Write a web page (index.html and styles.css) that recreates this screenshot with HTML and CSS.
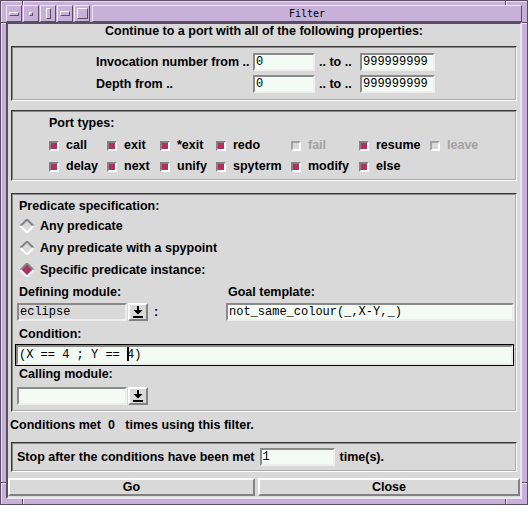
FILE: index.html
```html
<!DOCTYPE html>
<html>
<head>
<meta charset="utf-8">
<link rel="stylesheet" href="styles.css">
</head>
<body>
<div class="win">
  <svg class="notches" width="528" height="505" viewBox="0 0 528 505">
    <g stroke="#5b4d63" stroke-width="1">
      <line x1="22.5" y1="0" x2="22.5" y2="5"/>
      <line x1="505.5" y1="0" x2="505.5" y2="5"/>
      <line x1="22.5" y1="499" x2="22.5" y2="505"/>
      <line x1="505.5" y1="499" x2="505.5" y2="505"/>
      <line x1="0" y1="22.5" x2="6" y2="22.5"/>
      <line x1="522" y1="22.5" x2="528" y2="22.5"/>
      <line x1="0" y1="482.5" x2="6" y2="482.5"/>
      <line x1="522" y1="482.5" x2="528" y2="482.5"/>
    </g>
    <g stroke="#eee6f4" stroke-width="1">
      <line x1="23.5" y1="1" x2="23.5" y2="5"/>
      <line x1="506.5" y1="1" x2="506.5" y2="5"/>
      <line x1="23.5" y1="499" x2="23.5" y2="504"/>
      <line x1="506.5" y1="499" x2="506.5" y2="504"/>
      <line x1="1" y1="23.5" x2="6" y2="23.5"/>
      <line x1="522" y1="23.5" x2="527" y2="23.5"/>
      <line x1="1" y1="483.5" x2="6" y2="483.5"/>
      <line x1="522" y1="483.5" x2="527" y2="483.5"/>
    </g>
  </svg>
  <div class="titlebar">
    <div class="tbtn"><span class="g-menu"></span></div>
    <div class="tbtn"><span class="g-dot"></span></div>
    <div class="tbtn"><span class="g-tall"></span></div>
    <div class="tbtn"><span class="g-wide"></span></div>
    <div class="tbtn"><span class="g-sq"></span></div>
    <div class="title">Filter</div>
  </div>
  <div class="client">
    <div class="heading">Continue to a port with all of the following properties:</div>

    <div class="frame f-range">
      <div class="range-grid">
        <span class="lbl">Invocation number from ..</span>
        <span class="entry e-from">0</span>
        <span class="lbl to">.. to ..</span>
        <span class="entry e-to">999999999</span>
        <span class="lbl">Depth from ..</span>
        <span class="entry e-from">0</span>
        <span class="lbl to">.. to ..</span>
        <span class="entry e-to">999999999</span>
      </div>
    </div>

    <div class="frame f-ports">
      <div class="ports-title">Port types:</div>
      <div class="ports-grid">
        <label class="cb"><span class="ind on"></span>call</label>
        <label class="cb"><span class="ind on"></span>exit</label>
        <label class="cb"><span class="ind on"></span>*exit</label>
        <label class="cb"><span class="ind on"></span>redo</label>
        <label class="cb dis"><span class="ind"></span>fail</label>
        <label class="cb"><span class="ind on"></span>resume</label>
        <label class="cb dis"><span class="ind"></span>leave</label>
        <label class="cb"><span class="ind on"></span>delay</label>
        <label class="cb"><span class="ind on"></span>next</label>
        <label class="cb"><span class="ind on"></span>unify</label>
        <label class="cb"><span class="ind on"></span>spyterm</label>
        <label class="cb"><span class="ind on"></span>modify</label>
        <label class="cb"><span class="ind on"></span>else</label>
      </div>
    </div>

    <div class="frame f-pred">
      <div class="plabel">Predicate specification:</div>
      <div class="radios">
        <div class="radio"><svg class="dia" width="14" height="14" viewBox="0 0 14 14"><polygon points="7,0.5 13.5,7 7,13.5 0.5,7" fill="#d9d9d9"/><polyline points="0.5,7 7,0.5 13.5,7" fill="none" stroke="#828282" stroke-width="2"/><polyline points="0.5,7 7,13.5 13.5,7" fill="none" stroke="#ffffff" stroke-width="2"/></svg>Any predicate</div>
        <div class="radio"><svg class="dia" width="14" height="14" viewBox="0 0 14 14"><polygon points="7,0.5 13.5,7 7,13.5 0.5,7" fill="#d9d9d9"/><polyline points="0.5,7 7,0.5 13.5,7" fill="none" stroke="#828282" stroke-width="2"/><polyline points="0.5,7 7,13.5 13.5,7" fill="none" stroke="#ffffff" stroke-width="2"/></svg>Any predicate with a spypoint</div>
        <div class="radio"><svg class="dia" width="14" height="14" viewBox="0 0 14 14"><polygon points="7,0.5 13.5,7 7,13.5 0.5,7" fill="#b03060"/><polyline points="0.5,7 7,0.5 13.5,7" fill="none" stroke="#828282" stroke-width="2"/><polyline points="0.5,7 7,13.5 13.5,7" fill="none" stroke="#ffffff" stroke-width="2"/></svg>Specific predicate instance:</div>
      </div>
      <div class="mod-grid">
        <div class="plabel">Defining module:</div>
        <div class="plabel">Goal template:</div>
        <div class="mod-cell">
          <span class="entry e-mod ro">eclipse</span>
          <span class="arrowbtn"><svg width="12" height="12" viewBox="0 0 12 12"><path d="M5 0h2v4h3.5L6 8.5 1.5 4H5z" fill="#000"/><rect x="1" y="10" width="10" height="2" fill="#000"/></svg></span>
          <span class="colon">:</span>
        </div>
        <span class="entry e-goal">not_same_colour(_,X-Y,_)</span>
      </div>
      <div class="plabel cond-l">Condition:</div>
      <div class="cond-ring"><span class="entry e-cond">(X == 4 ; Y == <span class="caret"></span>4)</span></div>
      <div class="plabel call-l">Calling module:</div>
      <div class="mod-cell call-row">
        <span class="entry e-mod"></span>
        <span class="arrowbtn"><svg width="12" height="12" viewBox="0 0 12 12"><path d="M5 0h2v4h3.5L6 8.5 1.5 4H5z" fill="#000"/><rect x="1" y="10" width="10" height="2" fill="#000"/></svg></span>
      </div>
    </div>

    <div class="met">Conditions met  0   times using this filter.</div>

    <div class="frame f-stop">
      <span class="lbl">Stop after the conditions have been met</span>
      <span class="entry e-stop">1</span>
      <span class="lbl">time(s).</span>
    </div>

    <div class="buttons">
      <div class="btn go">Go</div>
      <div class="btn close">Close</div>
    </div>
  </div>
</div>
</body>
</html>
```

FILE: styles.css
```css
* { box-sizing: border-box; }
html, body { margin: 0; padding: 0; background: #ffffff; }
body {
  font-family: "Liberation Sans", Arial, sans-serif;
  font-size: 12.5px;
  font-weight: bold;
  color: #000;
  line-height: 15px;
}

.win {
  position: relative;
  width: 528px;
  height: 505px;
  background: #c8b1d9;
  border: 1px solid #5b4d63;
  box-shadow: inset 1px 1px 0 #e6dcee;
  padding: 4px 5px 5px 5px;
  display: flex;
  flex-direction: column;
}
.notches {
  position: absolute;
  left: -1px;
  top: -1px;
  pointer-events: none;
}

.titlebar {
  height: 17px;
  display: flex;
  gap: 1px;
}
.tbtn {
  width: 16px;
  height: 17px;
  border: 1px solid;
  border-color: #eee6f4 #5b4d63 #5b4d63 #eee6f4;
  display: flex;
  align-items: center;
  justify-content: center;
}
.tbtn span {
  display: block;
  border: 1px solid;
  border-color: #ffffff #5b4d63 #5b4d63 #ffffff;
}
.g-menu { width: 10px; height: 4px; }
.g-dot { width: 4px; height: 4px; }
.g-tall { width: 5px; height: 11px; }
.g-wide { width: 10px; height: 5px; }
.g-sq { width: 11px; height: 11px; }

.title {
  flex: 1;
  margin-left: 1px;
  border: 1px solid;
  border-color: #eee6f4 #5b4d63 #5b4d63 #eee6f4;
  font-family: "DejaVu Sans Mono", "Liberation Mono", monospace;
  font-weight: normal;
  font-size: 10px;
  line-height: 15px;
  text-align: center;
}

.client {
  flex: 1;
  background: #d9d9d9;
  border: 2px solid;
  border-color: #5b4d63 #eee6f4 #eee6f4 #5b4d63;
  display: flex;
  flex-direction: column;
}

.heading {
  text-align: center;
  height: 15px;
}

.frame {
  margin: 0 3px;
  border: 2px solid;
  border-color: #8a8a8a #ffffff #ffffff #8a8a8a;
  border-style: groove;
}

.entry {
  display: block;
  height: 18px;
  background: #f4fbf4;
  border: 2px solid;
  border-color: #8a8a8a #eeeeee #eeeeee #8a8a8a;
  font-family: "Liberation Mono", "DejaVu Sans Mono", monospace;
  font-weight: normal;
  font-size: 12px;
  line-height: 14px;
  padding-left: 1px;
  white-space: pre;
  overflow: hidden;
}
.entry.ro { background: #d9d9d9; }

/* range frame */
.f-range {
  margin-top: 7px;
  padding: 5px 0 6px 83px;
}
.range-grid {
  display: grid;
  grid-template-columns: 153px 62px 37px 75px;
  grid-auto-rows: 18px;
  row-gap: 4px;
  column-gap: 4px;
  align-items: center;
  white-space: nowrap;
}

/* ports */
.f-ports {
  margin-top: 9px;
  padding: 4px 0 2px 36px;
}
.ports-title { height: 15px; }
.ports-grid {
  margin-top: 4px;
  display: grid;
  grid-template-columns: 58px 53px 56px 75px 68px 71px auto;
  grid-auto-rows: 21px;
}
.cb {
  display: flex;
  align-items: center;
  white-space: nowrap;
}
.ind {
  width: 10px;
  height: 10px;
  margin-right: 7px;
  border: 2px solid;
  border-color: #828282 #ffffff #ffffff #828282;
  background: #d9d9d9;
}
.ind.on { background: #b03060; }
.cb.dis { color: #a3a3a3; }
.cb.dis .ind { border-color: #a3a3a3 #ffffff #ffffff #a3a3a3; }

/* predicate */
.f-pred {
  margin-top: 12px;
  padding: 4px 1px 5px 4px;
}
.plabel { padding-left: 2px; height: 15px; white-space: nowrap; }
.radios { margin-top: 1px; }
.radio {
  height: 22px;
  display: flex;
  align-items: center;
  padding-left: 3px;
}
.dia { margin-right: 6px; }
.mod-grid {
  margin-top: 4px;
  display: grid;
  grid-template-columns: 209px 1fr;
  row-gap: 3px;
}
.mod-cell { display: flex; align-items: center; }
.e-mod { width: 110px; }
.arrowbtn {
  width: 20px;
  height: 18px;
  margin-left: 1px;
  background: #d9d9d9;
  border: 2px solid;
  border-color: #ffffff #828282 #828282 #ffffff;
  display: flex;
  align-items: center;
  justify-content: center;
}
.colon { margin-left: 6px; }
.cond-l { margin-top: 6px; }
.cond-ring {
  margin: 2px 0 0 -2px;
  border: 1px solid #000;
  height: 22px;
}
.e-cond { height: 20px; line-height: 16px; }
.caret {
  display: inline-block;
  width: 2px;
  height: 14px;
  background: #000;
  vertical-align: -3px;
  margin-right: -2px;
}
.call-l { margin-top: 1px; }
.call-row { margin-top: 5px; }

.met {
  margin-top: 6px;
  padding-left: 2px;
  height: 15px;
  white-space: pre;
}

.f-stop {
  margin-top: 9px;
  height: 30px;
  display: flex;
  align-items: center;
  padding-left: 4px;
  white-space: nowrap;
}
.e-stop { width: 75px; margin: 0 5px 0 5px; }

.buttons {
  margin-top: 6px;
  display: flex;
  gap: 3px;
}
.btn {
  height: 18px;
  text-align: center;
  line-height: 14px;
  border: 2px solid;
  border-color: #ffffff #828282 #828282 #ffffff;
}
.go { width: 247px; }
.close { flex: 1; }
```
